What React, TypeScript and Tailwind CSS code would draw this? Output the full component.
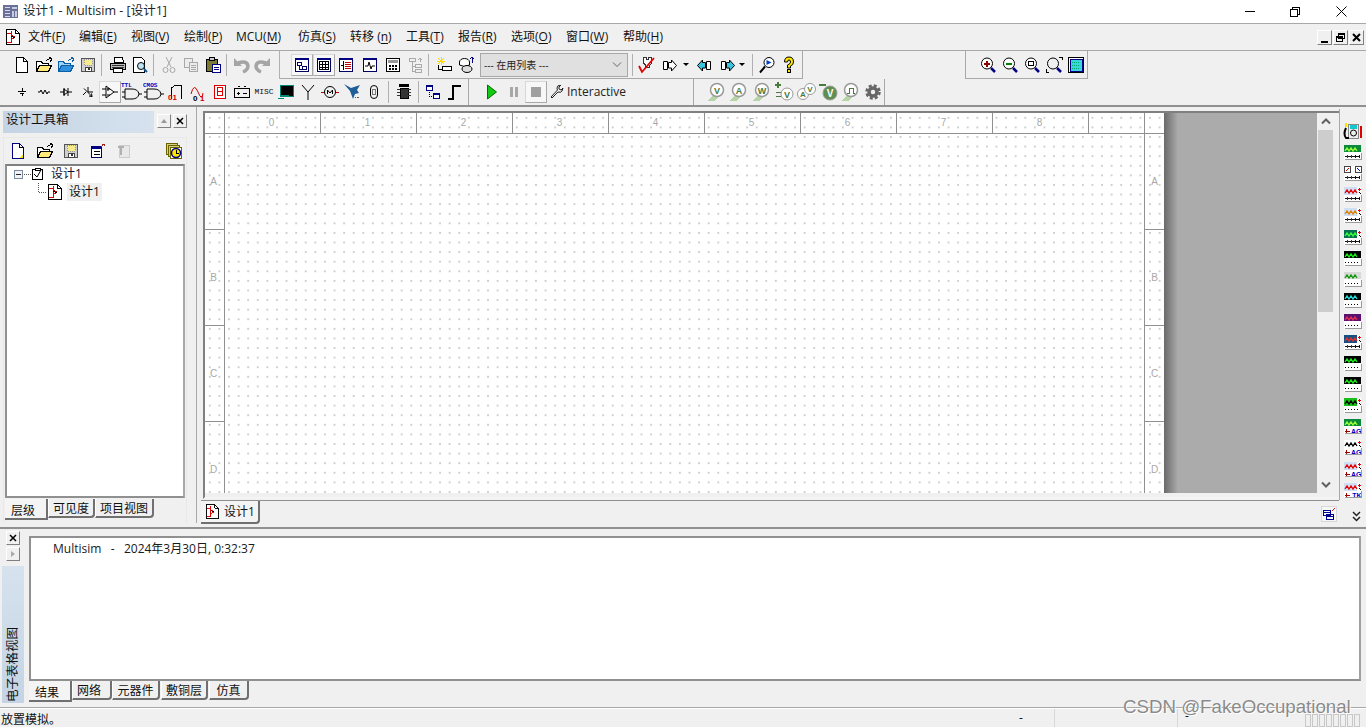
import React from "react";

type P = { children?: React.ReactNode; s?: number; w?: number; h?: number };
const Ic = ({ children, s = 18, w, h }: P) => (
  <svg width={w ?? s} height={h ?? s} viewBox={`0 0 ${w ?? s} ${h ?? s}`} fill="none" stroke="#000" strokeWidth="1" shapeRendering="crispEdges" className="shrink-0">
    {children}
  </svg>
);

const New = ({ y = false }: { y?: boolean }) => (
  <Ic><path d="M3.5 1.5h7l4 4v11h-11z" fill="#fff" stroke={y ? "#000080" : "#000"} />{y && <path d="M10 16l4-4v4z" fill="#ffe000" stroke="none" />}<path d="M10.5 1.5v4h4" /></Ic>
);
const Open = () => (
  <Ic><path d="M1.5 5.5h5l1 2h6v8h-12z" fill="#fff" /><path d="M1.5 15.5l3-6h12l-3 6z" fill="#ffe97a" /><path d="M11 5q2-3 5-2M14 1l3 2-2 3" stroke="#000" /></Ic>
);
const Open2 = () => (
  <Ic><path d="M1.5 5.5h5l1 2h6v8h-12z" fill="#9fd0f5" stroke="#0b5fa8" /><path d="M1.5 15.5l3-6h12l-3 6z" fill="#2f8fdc" stroke="#0b5fa8" /><path d="M11 5q2-3 5-2M14 1l3 2-2 3" stroke="#0b5fa8" /></Ic>
);
const Save = () => (
  <Ic><path d="M2.5 2.5h13v13h-13z" fill="#cfcfcf" stroke="#555" /><path d="M5 3h8v6H5z" fill="#f7ec8a" stroke="#999" strokeDasharray="1 1" /><path d="M6 11h6v4H6z" fill="#fff" stroke="#444" /><path d="M9 12h2v2H9z" fill="#333" stroke="none" /></Ic>
);
const Printer = () => (
  <Ic><path d="M5.5 1.5h8l1 5h-9z" fill="#fff" /><path d="M1.5 7.5h15v6h-15z" fill="#bbb" /><path d="M4.5 12.5h9v4h-9z" fill="#fff" /><path d="M3 9h12M3 11h12" stroke="#333" /></Ic>
);
const Preview = () => (
  <Ic><path d="M2.5 1.5h8l3 3v12h-11z" fill="#fff" /><circle cx="10" cy="10" r="3.5" fill="#bfe5f5" stroke="#000" shapeRendering="auto" /><path d="M13 13l3 3" stroke="#0a5a9a" strokeWidth="2" shapeRendering="auto" /></Ic>
);
const Cut = () => (
  <Ic><g stroke="#a8a8a8" shapeRendering="auto"><path d="M6 1l5 10M12 1L7 11" /><circle cx="5.5" cy="14" r="2.5" /><circle cx="12.5" cy="14" r="2.5" /></g></Ic>
);
const Copy = () => (
  <Ic><g stroke="#a8a8a8" fill="#ececec"><path d="M2.5 2.5h8v9h-8z" /><path d="M7.5 6.5h8v9h-8z" /><path d="M9 9h5M9 11h5M9 13h5" /></g></Ic>
);
const Paste = () => (
  <Ic><path d="M2.5 3.5h11v12h-11z" fill="#7b7a33" /><path d="M5.5 1.5h5v3h-5z" fill="#ccc" /><path d="M8.5 8.5h8v8h-8z" fill="#fff" stroke="#000080" /><path d="M10 11h5M10 13h5" stroke="#000080" /></Ic>
);
const Undo = ({ flip = false }: { flip?: boolean }) => (
  <Ic><g transform={flip ? "translate(18 0) scale(-1 1)" : undefined} shapeRendering="auto"><path d="M2 2v8h8z" fill="#a5a5a5" stroke="none" /><path d="M6 7q9-3 10 3 0 4-5 6" stroke="#a5a5a5" strokeWidth="3.5" /></g></Ic>
);
const Win = ({ k }: { k: number }) => (
  <Ic s={18}>
    <path d="M2.5 2.5h13v13h-13z" fill="#fff" stroke="#000060" strokeWidth="1" />
    <path d="M2 2h14v2H2z" fill="#000080" stroke="none" />
    {k === 0 && <path d="M4.5 6.5h4v3h-4zM9.5 10.5h4v3h-4zM6 10v3h3" stroke="#000060" />}
    {k === 1 && <path d="M4.5 5.5h9v8h-9zM4 8.5h10M4 11h10M7.5 5v9M10.5 5v9" stroke="#000" />}
    {k === 2 && <><path d="M6.500 5v9" stroke="#000" /><path d="M8 6h6M8 8h6M8 10h6M8 12h6" stroke="#c00000" /><path d="M3.500 9h3" stroke="#000" /></>}
    {k === 3 && <path d="M4 10h3l1-4 2 7 1-3h3" stroke="#000" shapeRendering="auto" />}
  </Ic>
);
const Calc = () => (
  <Ic><path d="M2.5 2.5h13v13h-13z" fill="#fff" /><path d="M4 4h10v3H4z" fill="#999" stroke="none" /><path d="M5 9h1v1H5zM8 9h1v1H8zM11 9h1v1h-1zM5 12h1v1H5zM8 12h1v1H8zM11 12h1v1h-1z" fill="#000" /></Ic>
);
const TreeG = () => (
  <Ic><g stroke="#aaa"><path d="M3.5 2.5h6v3h-6zM9.5 8.5h6v3h-6zM9.5 13.5h6v3h-6zM6 6v9h3M6 10h3" /><path d="M14 2v4M12 4l2-2 2 2" /></g></Ic>
);
const Star = () => (
  <Ic><path d="M6 1v8M2 5h8M3 2l6 6M9 2L3 8" stroke="#ffd800" /><path d="M7.5 10.5h9v4h-9z" fill="#fff" /><path d="M3 9v4h4" stroke="#000" /></Ic>
);
const Db = () => (
  <Ic>
    <g shapeRendering="auto"><ellipse cx="6.5" cy="6" rx="5" ry="3.5" fill="#fff" /><path d="M1.5 6v3q5 3 10 0V6" fill="#fff" /><ellipse cx="9" cy="13" rx="5" ry="3.5" fill="#ddd" /></g>
    <path d="M14 1v6M12 3l2-2 2 2" stroke="#000080" />
  </Ic>
);
const Check = () => (
  <Ic><path d="M5.5 1.5h3v2h2v-2h3v6l-2 2v2h-4V9l-2-2z" fill="#fff" stroke="#333" /><path d="M1 10l3 6L16 2" stroke="#e00000" strokeWidth="1.800" shapeRendering="auto" /></Ic>
);
const Xfer = ({ c = "#fff", flip }: { c?: string; flip?: boolean }) => (
  <Ic s={16}><g transform={flip ? "translate(16 0) scale(-1 1)" : undefined} shapeRendering="auto"><path d="M1.500 4.500h4v8h-4z" fill="#fff" stroke="#000" /><path d="M6.500 5.500h3V3l5 5.500-5 5.500v-3h-3z" fill={c} stroke="#000" /></g></Ic>
);
const Search = () => (
  <Ic><g shapeRendering="auto"><circle cx="11" cy="6.500" r="5" fill="#fff" /><path d="M8.500 4l5 2.500-5 2.500z" fill="#0040c0" stroke="none" /><path d="M7 10.500l-5 6" strokeWidth="2" /></g></Ic>
);
const Help = () => (
  <Ic><path d="M4.500 6q0-5 4.500-5t4.500 5q0 3-3 4v2h-3V9q3-1 3-3 0-2-1.500-2T7.500 6z" fill="#ffe800" stroke="#000" shapeRendering="auto" /><path d="M7.500 13.500h3v3h-3z" fill="#ffe800" /></Ic>
);
const Zoom = ({ k }: { k: number }) => (
  <Ic><g shapeRendering="auto"><circle cx="8" cy="7.500" r="5.500" fill={k === 3 ? "none" : "#fff"} /><path d="M12 12l4 4" stroke="#000080" strokeWidth="2.500" /></g>
    {k === 0 && <path d="M5 7h6v2H5zM7 5h2v6H7z" fill="#8b0000" stroke="none" />}
    {k === 1 && <path d="M5 7h6v2H5z" fill="#008000" stroke="none" />}
    {k === 2 && <path d="M5.500 5.500h5v4h-5z" />}
    {k === 3 && <path d="M1 13v3h3M14 1h3v3" />}
  </Ic>
);
const Fit = () => (
  <Ic><path d="M1.500 1.500h15v15h-15z" fill="#fff" /><path d="M3 3h12v12H3z" fill="#39d5dd" stroke="#000080" /><path d="M5 6h8M5 9h8M5 12h8" stroke="#0a6" strokeDasharray="1 1" /></Ic>
);

const Comp = ({ k }: { k: string }) => {
  const v: Record<string, React.ReactNode> = {
    src: <path d="M9 5v3M5 8h8M7 10h4M9 10v3" />,
    res: <path d="M3 9h2l1-2 2 4 2-4 2 4 1-2h2" shapeRendering="auto" />,
    dio: <path d="M3 9h4M11 9h4M11 5v8M7 6l4 3-4 3zM7 5v8" shapeRendering="auto" />,
    tra: <path d="M5 5.500l8 8M7 9l-3 3M9 4v5h5M13 13.500l-3-.5M13 13.500l-.5-3" shapeRendering="auto" />,
    ana: <path d="M1 6h4M1 12h4M13 9h4M5 3v12l8-6zM7 5v3M6 6h3M6 12h3" shapeRendering="auto" />,
  };
  return <Ic>{v[k]}</Ic>;
};
const Gate = ({ t, c }: { t: string; c: string }) => (
  <Ic s={22}><path d="M1 11h3M1 16h3M18 13h3M4 8h7q6 0 7 5-1 5-7 5H4z" shapeRendering="auto" /><text x="0" y="6" fontSize="6" fontWeight="700" fill={c} stroke="none" fontFamily="Liberation Mono">{t}</text></Ic>
);
const Seven = () => (
  <Ic><path d="M3.500 2.500h11v13h-11z" fill="#fff" stroke="#e00000" /><path d="M6.500 4.500h5v4h-5zM6.500 8.500h5v4h-5z" stroke="#e00000" /></Ic>
);
const Batt = () => (
  <Ic><path d="M1.500 5.500h15v9h-15zM5 3h2M11 3h2" /><path d="M4 10h3M5.500 8.500v3M10 10h4" /></Ic>
);
const Term = () => (
  <Ic><path d="M3.500 2.500h13v11h-13z" fill="#000" stroke="#087" /><path d="M1 15h6M4 12h8" stroke="#087" /></Ic>
);
const Ant = () => <Ic><path d="M9 9L3 2M9 9l6-7M9 9v8" shapeRendering="auto" /></Ic>;
const Motor = () => (
  <Ic><circle cx="9" cy="9" r="5.500" shapeRendering="auto" /><path d="M6.500 11V7l2.500 3 2.500-3v4" shapeRendering="auto" /><path d="M0 9h3M15 9h3" stroke="#c00000" /></Ic>
);
const Mech = () => (
  <Ic><path d="M1 1l7 4 9-3-3 5 2 3-4 1-2 5-3-8z" fill="#1f5d99" stroke="none" shapeRendering="auto" /><path d="M12 14h1M14 14h2" stroke="#555" /></Ic>
);
const Bulb = () => (
  <Ic><rect x="5.500" y="2.500" width="7" height="13" rx="3.500" shapeRendering="auto" /><path d="M7.500 6.500h3v5h-3z" stroke="#777" /></Ic>
);
const Mcu = () => (
  <Ic><path d="M5 5h8v10H5z" fill="#333" /><path d="M2 6h3M2 9h3M2 12h3M13 6h3M13 9h3M13 12h3" stroke="#333" /><path d="M4 1h10v3H4z" fill="#000" stroke="none" /></Ic>
);
const Hier = () => (
  <Ic><path d="M2.500 2.500h6v5h-6zM9.500 10.500h6v5h-6z" fill="#fff" stroke="#000080" /><path d="M3 3h5v1H3zM10 11h5v1h-5z" fill="#000080" stroke="none" /><path d="M5 9v4h3" strokeDasharray="1 1" stroke="#000" /></Ic>
);
const Bus = () => <Ic><path d="M2 16h5V3h8" stroke="#000" strokeWidth="2" /></Ic>;

const Meter = ({ l }: { l: string }) => {
  const c = l === "_n" ? <path d="M6 11h2V6h4v5h2" stroke="#4a7a3c" /> : <text x="10" y="11.500" fontSize="9" fontWeight="700" textAnchor="middle" fill="#4a7a3c" stroke="none" fontFamily="Liberation Sans">{l}</text>;
  return (
    <Ic s={20}>
      <path d="M1 19l5-6h7l-6 6z" fill="#b7d3a8" stroke="none" />
      <circle cx="10" cy="8" r="6.500" fill="#fff" stroke="#9a9a9a" strokeWidth="1.500" shapeRendering="auto" />
      {c}
    </Ic>
  );
};
const MeterP = () => (
  <Ic s={20}><path d="M1 3h6M4 0v6" stroke="#4a7a3c" strokeWidth="2" /><path d="M2 10h6M2 14h6" stroke="#4a7a3c" /><circle cx="13" cy="12" r="6" fill="#fff" stroke="#9a9a9a" shapeRendering="auto" /><text x="13" y="15.500" fontSize="9" fontWeight="700" textAnchor="middle" fill="#4a7a3c" stroke="none" fontFamily="Liberation Sans">V</text></Ic>
);
const MeterAV = () => (
  <Ic s={20}><circle cx="7" cy="12" r="5.500" fill="#fff" stroke="#9a9a9a" shapeRendering="auto" /><circle cx="14" cy="7" r="5.500" fill="#fff" stroke="#9a9a9a" shapeRendering="auto" /><text x="7" y="15" fontSize="8" fontWeight="700" textAnchor="middle" fill="#4a7a3c" stroke="none" fontFamily="Liberation Sans">A</text><text x="14" y="10" fontSize="8" fontWeight="700" textAnchor="middle" fill="#4a7a3c" stroke="none" fontFamily="Liberation Sans">V</text></Ic>
);
const MeterV = () => (
  <Ic s={20}><path d="M0 3h7" stroke="#4a7a3c" strokeWidth="2" /><circle cx="11" cy="11" r="7" fill="#5f8f50" stroke="#9a9a9a" shapeRendering="auto" /><text x="11" y="15" fontSize="10" fontWeight="700" textAnchor="middle" fill="#fff" stroke="none" fontFamily="Liberation Sans">V</text></Ic>
);
const Gear = () => (
  <Ic s={20}><circle cx="10" cy="10" r="4" stroke="#666" strokeWidth="3.500" shapeRendering="auto" /><circle cx="10" cy="10" r="6.500" stroke="#666" strokeWidth="2.500" strokeDasharray="3 2.100" shapeRendering="auto" /></Ic>
);

const Inst = ({ scr, tr, foot, big, two }: { scr: string; tr: string; foot: string; big?: boolean; two?: boolean }) => (
  <svg width="22" height="17" viewBox="0 0 22 17" fill="none" strokeWidth="1" shapeRendering="crispEdges" className="shrink-0">
    <path d="M2 1h17v15H2z" fill="#fff" />
    {two ? (
      <>
        <path d="M2.500 1.500h6v6h-6zM13.500 1.500h6v6h-6z" fill="#fff" stroke="#444" />
        <path d="M4 6l3-3" stroke="#d00000" /><path d="M15 3l3 3" stroke="#0000d0" />
      </>
    ) : (
      <>
        <path d={big ? "M2 1h17v7H2z" : "M2 1h13v8H2z"} fill={scr} />
        <path d="M3 7l2-3 2 3 2-3 2 3 2-3 2 3" stroke={tr} strokeWidth="1.300" shapeRendering="auto" />
        {big ? null : <path d="M16 3h3v1h-3zM17 2h1v3h-1z" fill="#e00000" />}
        {big ? null : <path d="M17 6h1v1h-1zM18 7h1v1h-1z" fill="#000" />}
      </>
    )}
    {foot === "AG" || foot === "TK" ? (
      <>
        <text x="19.500" y="15.500" textAnchor="end" fontSize="7" fontWeight="700" fill="#0000c8" fontFamily="Liberation Sans">{foot}</text>
        <path d="M3 13h5M4 11v4" stroke="#a00000" />
      </>
    ) : null}
    {foot === "dots" && <path d="M3 12.500h15" stroke="#000" strokeDasharray="1 2" />}
    {foot === "pins" && <><path d="M3 12.500h15" stroke="#111" /><path d="M5 11v3M9 11v3" stroke="#c00000" /><path d="M13 11v3M17 11v3" stroke="#0000a0" /></>}
    <path d="M2.500 15.500h17M19.500 9v7" stroke="#9a9a9a" />
  </svg>
);
const Multi = () => (
  <svg width="22" height="20" viewBox="0 0 22 20" fill="none" shapeRendering="crispEdges" className="shrink-0">
    <path d="M4 1v4" stroke="#ffe000" strokeWidth="2" /><path d="M19 4v12" stroke="#e00000" strokeWidth="2" />
    <path d="M6.500 2.500h10v14h-10z" fill="#eee" stroke="#888" /><path d="M8 3h7v4H8z" fill="#13c8cf" />
    <circle cx="11.500" cy="11" r="3" stroke="#000" shapeRendering="auto" />
    <path d="M4 6q-3 6 0 10h3" stroke="#000" strokeWidth="2" shapeRendering="auto" />
  </svg>
);

const B = ({ children, w = "w-[22px]", on }: { children?: React.ReactNode; w?: string; on?: boolean }) => (
  <div className={`${w} h-[22px] flex items-center justify-center shrink-0 ${on ? "border border-[#d8d8d8] border-b-[#a8a8a8] border-r-[#a8a8a8] bg-[#f7f7f7]" : ""}`}>{children}</div>
);

const Mn = ({ t, k }: { t: string; k: string }) => (
  <span>{t}(<span className="underline underline-offset-2">{k}</span>)</span>
);

const menus: [string, string, string][] = [
  ["文件", "F", "w-[51px]"], ["编辑", "E", "w-[52px]"], ["视图", "V", "w-[53px]"], ["绘制", "P", "w-[52px]"],
  ["MCU", "M", "w-[62px]"], ["仿真", "S", "w-[52px]"], ["转移 ", "n", "w-[56px]"], ["工具", "T", "w-[52px]"],
  ["报告", "R", "w-[53px]"], ["选项", "O", "w-[55px]"], ["窗口", "W", "w-[57px]"], ["帮助", "H", "w-[60px]"],
];

const SchemIcon = ({ s = 18 }: { s?: number }) => (
  <svg width={s} height={s} viewBox="0 0 18 18" fill="none" stroke="#000" shapeRendering="crispEdges" className="shrink-0">
    <path d="M2.500 1.500h9l4 4v11h-13z" fill="#fff" />
    <path d="M11.500 1.500v4h4" />
    <path d="M3 5.500h4v9H3M7 3v12M7 7l4 2-4 3" stroke="#e00000" />
    <path d="M7 8l4 2" stroke="#000" />
  </svg>
);

const cols = ["0", "1", "2", "3", "4", "5", "6", "7", "8"];
const rows = ["A", "B", "C", "D"];
const instruments: React.ReactNode[] = [
  <Multi />,
  <Inst scr="#0a8a3a" tr="#9dff3a" foot="pins" big />,
  <Inst scr="#fff" tr="#e00000" foot="pins" two />,
  <Inst scr="#cfe0f5" tr="#e00000" foot="pins" />,
  <Inst scr="#cfe0f5" tr="#e08000" foot="pins" />,
  <Inst scr="#087050" tr="#3aff3a" foot="pins" />,
  <Inst scr="#000" tr="#19f019" foot="dots" big />,
  <Inst scr="#d8d8d8" tr="#0a9a0a" foot="dots" big />,
  <Inst scr="#000" tr="#27e0e0" foot="dots" big />,
  <Inst scr="#5a1070" tr="#e03050" foot="dots" big />,
  <Inst scr="#155080" tr="#e03030" foot="pins" />,
  <Inst scr="#000" tr="#19f019" foot="dots" big />,
  <Inst scr="#000" tr="#19f019" foot="dots" big />,
  <Inst scr="#19c019" tr="#000" foot="dots" />,
  <Inst scr="#0a8a3a" tr="#9dff3a" foot="AG" big />,
  <Inst scr="#fff" tr="#000" foot="AG" />,
  <Inst scr="#cfe0f5" tr="#e00000" foot="AG" />,
  <Inst scr="#cfe0f5" tr="#e00000" foot="TK" />,
];

const Tab = ({ t, w, on, c = "" }: { t: string; w: string; on?: boolean; c?: string }) => (
  <div className={`${w} ${c} flex items-center justify-center shrink-0 border-r-2 border-b-2 border-[#707070] ${on ? "h-[21px] bg-[#f4f4f4] pt-[5px] pr-[5px]" : "h-[19px] pt-[2px] border-l border-l-white rounded-br-sm"}`}>{t}</div>
);

const MiniBtn = ({ children }: { children: React.ReactNode }) => (
  <div className="w-[14px] h-[14px] flex items-center justify-center border border-white border-r-[#808080] border-b-[#808080] bg-[#f0f0f0] shrink-0">{children}</div>
);

export default function App() {
  return (
    <div className="relative w-[1366px] h-[727px] overflow-hidden bg-[#f0f0f0] text-[12px] leading-none text-black font-['Open_Sans','Noto_Sans_CJK_SC',sans-serif] flex flex-col">
      {/* title */}
      <div className="h-[23px] bg-white flex items-center shrink-0">
        <svg width="18" height="16" viewBox="0 0 18 16" className="ml-[2px] shrink-0" shapeRendering="crispEdges">
          <path d="M1 1h15v13H1z" fill="#6a7098" /><path d="M3 3h5v1H3zM3 6h5v1H3zM3 9h5v1H3zM3 12h5v1H3z" fill="#d8dce8" /><path d="M10 3h5v2h-5zM10 7h2v6h-2zM13 7h2v6h-2z" fill="#c8cce0" />
        </svg>
        <span className="ml-[3px] text-[12.5px] text-[#222]">设计1 - Multisim - [设计1]</span>
        <div className="ml-auto mr-[2px] flex items-center h-full">
          <div className="w-[45px] flex justify-center"><div className="w-[10px] h-px bg-black" /></div>
          <div className="w-[46px] flex justify-center">
            <svg width="10" height="10" viewBox="0 0 10 10" fill="none" stroke="#000" shapeRendering="crispEdges"><path d="M.5 2.500h7v7h-7zM2.500 2V.5h7v7H8" /></svg>
          </div>
          <div className="w-[46px] flex justify-center">
            <svg width="11" height="11" viewBox="0 0 11 11" fill="none" stroke="#000"><path d="M.5.5l10 10M10.500.5L.5 10.500" /></svg>
          </div>
        </div>
      </div>
      {/* menu */}
      <div className="h-[28px] border-t border-[#a8a8a8] border-b border-b-[#a8a8a8] flex items-center shrink-0 pl-[4px]">
        <SchemIcon s={18} />
        <div className="flex ml-[6px] text-[12px] text-[#111]">
          {menus.map(([t, k, w]) => (
            <div key={k} className={w}><Mn t={t} k={k} /></div>
          ))}
        </div>
        <div className="ml-auto mr-[2px] flex gap-px">
          {["_", "r", "x"].map((g) => (
            <div key={g} className="w-[15px] h-[15px] border border-white border-r-[#808080] border-b-[#808080] flex items-center justify-center">
              <svg width="11" height="11" viewBox="0 0 11 11" fill="none" stroke="#000" strokeWidth="1" shapeRendering="crispEdges">
                {g === "_" && <path d="M2 9h6v1.500H2z" fill="#000" />}
                {g === "r" && <path d="M3.500 1.500h6v5h-6zM1.500 4.500h6v5h-6zM3 2.500h6M1 5.500h6" />}
                {g === "x" && <path d="M2 2l7 7M9 2L2 9" strokeWidth="2" shapeRendering="auto" />}
              </svg>
            </div>
          ))}
        </div>
      </div>
      {/* toolbar 1 */}
      <div className="h-[28px] flex items-center shrink-0">
        <div className="h-full flex items-center pl-[11px] pr-[2px] w-[280px] border-r border-[#b0b0b0] shrink-0">
          <B><New /></B><B><Open /></B><B><Open2 /></B><B><Save /></B>
          <div className="w-px h-[22px] bg-[#b0b0b0] ml-[2px] mr-[5px]" />
          <B><Printer /></B><B><Preview /></B>
          <div className="w-px h-[22px] bg-[#b0b0b0] ml-[2px] mr-[4px]" />
          <B><Cut /></B><B><Copy /></B><B><Paste /></B>
          <div className="w-px h-[22px] bg-[#b0b0b0] ml-[2px] mr-[3px]" />
          <B><Undo /></B><B><Undo flip /></B>
        </div>
        <div className="h-full w-[523px] flex items-center pl-[11px] border-r border-b border-[#a8a8a8] shrink-0">
          <B on><Win k={0} /></B><B on><Win k={1} /></B><B><Win k={2} /></B><B w="w-[25px]"><Win k={3} /></B><B><Calc /></B><B><TreeG /></B>
          <div className="w-px h-[22px] bg-[#b0b0b0] ml-[2px] mr-[4px]" />
          <B><Star /></B><B w="w-[24px]"><Db /></B>
          <div className="w-[148px] h-[24px] ml-[1px] bg-[#e0e0e0] border border-[#a8a8a8] flex items-center pl-[3px] pr-[2px] text-[10px] text-[#222] shrink-0">
            <span>--- 在用列表 ---</span>
            <svg className="ml-auto mr-[2px]" width="12" height="8" viewBox="0 0 12 8" fill="none" stroke="#666"><path d="M2 1.500l4 4 4-4" /></svg>
          </div>
          <div className="w-px h-[22px] bg-[#b0b0b0] ml-[4px] mr-[3px]" />
          <B><Check /></B>
          <B w="w-[24px]"><Xfer /></B>
          <div className="w-[8px] flex justify-center"><div className="border-x-[3px] border-x-transparent border-t-[3px] border-t-black" /></div>
          <B w="w-[28px]"><Xfer c="#39c5e0" flip /></B>
          <B w="w-[20px]"><Xfer c="#39c5e0" /></B>
          <div className="w-[8px] flex justify-center"><div className="border-x-[3px] border-x-transparent border-t-[3px] border-t-black" /></div>
          <div className="w-px h-[22px] bg-[#b0b0b0] ml-[6px] mr-[3px]" />
          <B><Search /></B><B><Help /></B>
        </div>
        <div className="h-full ml-[162px] w-[123px] flex items-center pl-[11px] border-x border-b border-[#a8a8a8] shrink-0">
          <B><Zoom k={0} /></B><B><Zoom k={1} /></B><B><Zoom k={2} /></B><B><Zoom k={3} /></B><B><Fit /></B>
        </div>
      </div>
      {/* toolbar 2 */}
      <div className="h-[28px] flex items-center shrink-0 border-b-2 border-[#909090]">
        <div className="h-full w-[469px] flex items-center pl-[11px] border-r border-[#a8a8a8] shrink-0">
          <B><Comp k="src" /></B><B><Comp k="res" /></B><B><Comp k="dio" /></B><B><Comp k="tra" /></B><B on><Comp k="ana" /></B>
          <B><Gate t="TTL" c="#0000c0" /></B><B><Gate t="CMOS" c="#0000c0" /></B>
          <B><Ic><path d="M4.500 16V5l4-3h6v14" /><text x="1" y="17" fontSize="8" fontWeight="700" fill="#d00000" stroke="none" fontFamily="Liberation Sans">01</text></Ic></B>
          <B><Ic><path d="M2 11q3-12 7-2t5 1" stroke="#d00000" shapeRendering="auto" /><text x="4" y="18" fontSize="8" fontWeight="700" fill="#000" stroke="none" fontFamily="Liberation Sans">0</text><text x="11" y="18" fontSize="8" fontWeight="700" fill="#d00000" stroke="none" fontFamily="Liberation Sans">1</text></Ic></B>
          <B><Seven /></B><B><Batt /></B>
          <B><span className="text-[8px] font-['Liberation_Mono',monospace] text-[#111]">MISC</span></B>
          <B><Term /></B><B><Ant /></B><B><Motor /></B><B><Mech /></B><B><Bulb /></B>
          <div className="w-px h-[22px] bg-[#b0b0b0] ml-[3px] mr-[4px]" />
          <B><Mcu /></B>
          <div className="w-px h-[22px] bg-[#b0b0b0] mx-[3px]" />
          <B><Hier /></B><B><Bus /></B>
        </div>
        <div className="h-full w-[225px] flex items-center pl-[12px] border-r border-[#a8a8a8] shrink-0">
          <B><svg width="12" height="16" viewBox="0 0 12 16"><path d="M1.500 1l9 7-9 7z" fill="#12c912" stroke="#0a6a0a" /></svg></B>
          <B><div className="flex gap-[2px]"><div className="w-[3px] h-[10px] bg-[#a8a8a8]" /><div className="w-[3px] h-[10px] bg-[#a8a8a8]" /></div></B>
          <B on><div className="w-[10px] h-[10px] bg-[#a0a0a0]" /></B>
          <svg width="14" height="14" viewBox="0 0 14 14" fill="none" stroke="#222" className="ml-[3px] shrink-0"><path d="M1 12l1 1 6-6q3 1 4-1l1-3-2 2-2-1 0-2 2-2q-4 0-4 3 0 1 .5 2z" /></svg>
          <span className="ml-[3px] text-[12px] text-[#222] font-['Open_Sans',sans-serif]">Interactive</span>
        </div>
        <div className="h-full w-[191px] flex items-center pl-[12px] border-r border-[#a8a8a8] shrink-0">
          <B><Meter l="V" /></B><B><Meter l="A" /></B><B w="w-[23px]"><Meter l="W" /></B><B w="w-[22px]"><MeterP /></B><B w="w-[22px]"><MeterAV /></B><B w="w-[23px]"><MeterV /></B><B><Meter l="_n" /></B><B><Gear /></B>
        </div>
      </div>
      {/* main */}
      <div className="h-[422px] flex shrink-0 border-b-2 border-[#909090]">
        {/* left panel */}
        <div className="w-[197px] border-r border-[#a8a8a8] h-[416px] pl-[3px] pt-[4px] shrink-0">
          <div className="flex items-center h-[22px]">
            <div className="w-[151px] h-[22px] bg-gradient-to-r from-[#c4d4e4] to-[#d6e2ee] flex items-center pl-[3px] pb-[4px] text-[12.5px] text-[#111]">设计工具箱</div>
            <div className="ml-[3px] mb-[3px]"><MiniBtn><div className="border-x-[3px] border-x-transparent border-b-[4px] border-b-[#999]" /></MiniBtn></div>
            <div className="ml-[2px] mb-[3px]"><MiniBtn><svg width="8" height="8" viewBox="0 0 8 8" stroke="#000" strokeWidth="1.500"><path d="M1 1l6 6M7 1L1 7" /></svg></MiniBtn></div>
          </div>
          <div className="w-[184px] h-[386px] mt-[4px] border border-[#e8e8e8] border-b-0 flex flex-col">
            <div className="h-[26px] flex items-center pl-[5px] shrink-0">
              <div className="flex items-center gap-[8.5px]">
                <New y /><Open /><Save />
                <Ic><path d="M2.500 4.500h10v11h-10z" fill="#fff" stroke="#000060" /><path d="M2 4h11v3H2z" fill="#000080" stroke="none" /><path d="M4.500 9.500h6M4.500 12.500h6" /><path d="M12 5l3-3M13 2h2v2" stroke="#a02020" /></Ic>
                <Ic><path d="M4.500 3.500h10v12h-10z" fill="#e8e8e8" stroke="#ccc" /><path d="M3 4h6v2H7v7H5V6H3z" fill="#b0b0b0" stroke="none" /></Ic>
              </div>
              <div className="ml-[32px]"><Ic><path d="M1.500 1.500h11v11h-11z" fill="#d8d080" stroke="#6a6400" /><path d="M3.500 3.500h11v11h-11z" fill="#d8d080" stroke="#6a6400" /><path d="M5.500 5.500h11v11h-11z" fill="#fff" stroke="#6a6400" /><circle cx="11" cy="11" r="4.500" fill="#ffe800" stroke="#000080" strokeWidth="1.500" shapeRendering="auto" /><path d="M11 8v3h3" stroke="#000" /></Ic></div>
            </div>
            <div className="w-[180px] h-[334px] ml-[1px] bg-white border-2 border-[#909090] border-r-[#a8a8a8] border-t-[#808080] text-[#111] shrink-0">
              <div className="flex items-center h-[16px] pl-[7px]">
                <svg width="17" height="9" viewBox="0 0 17 9" fill="none" shapeRendering="crispEdges" className="shrink-0"><path d="M.5.5h8v8h-8z" fill="#f2f2f2" stroke="#7a8aa0" /><path d="M2 4.500h5" stroke="#223" /><path d="M10 4.500h7" stroke="#555" strokeDasharray="1 1" /></svg>
                <Ic s={14}><path d="M1.500 2.500h10v10h-10z" fill="#fff" /><path d="M4 1h5v2H4z" fill="#fff" stroke="#000" /><path d="M3 7l3 3 4-7" shapeRendering="auto" /></Ic>
                <span className="ml-[6px] text-[12px] text-[#113]">设计1</span>
              </div>
              <div className="flex items-center h-[18px] pl-[24px] mt-[1px]">
                <svg width="18" height="18" viewBox="0 0 18 18" fill="none" stroke="#555" strokeDasharray="1 1" shapeRendering="crispEdges" className="shrink-0 -ml-[2px]"><path d="M9.500 0v9.500H18" /></svg>
                <div className="ml-[-1px]"><SchemIcon s={18} /></div>
                <span className="ml-[3px] h-[18px] px-[2px] flex items-center bg-[#f0f0f0] text-[12px]">设计1</span>
              </div>
            </div>
            <div className="flex pl-[1px] mt-[1px] text-[12px] text-[#111]">
              <Tab t="层级" w="w-[43px]" on /><Tab t="可见度" w="w-[47px]" /><Tab t="项目视图" w="w-[59px]" />
            </div>
          </div>
        </div>
        {/* workspace */}
        <div className="flex-1 min-w-0 flex flex-col">
          <div className="h-[393px] ml-[6px] flex border-t-[2px] border-t-transparent shrink-0">
            <div className="flex-1 min-w-0 border-2 border-[#808080] border-b-[#f4f4f4] border-r-0 flex h-[388px] mt-[2px] overflow-hidden">
              {/* sheet */}
              <div className="w-[959px] h-[380px] shrink-0 bg-white bg-[radial-gradient(circle,#8a8a8a_0.5px,transparent_0.8px)] bg-[size:9.6px_9.6px] flex flex-col text-[10px] text-[#a8a8a8] font-['Liberation_Sans',sans-serif] overflow-hidden">
                <div className="h-[21px] flex border-b border-[#909090] shrink-0">
                  <div className="w-[20px] border-r border-[#909090] shrink-0" />
                  {cols.map((c) => (
                    <div key={c} className="w-[96px] border-r border-[#909090] flex items-center justify-center pr-[2px] shrink-0">{c}</div>
                  ))}
                  <div className="w-[56px] border-r border-[#909090] shrink-0" />
                </div>
                <div className="flex flex-1 min-h-0 overflow-hidden">
                  <div className="w-[20px] border-r border-[#909090] shrink-0">
                    {rows.map((r) => <div key={r} className="h-[96px] w-full border-b border-[#909090] flex items-center justify-center pr-[2px]">{r}</div>)}
                  </div>
                  <div className="w-[920px] shrink-0" />
                  <div className="w-[20px] shrink-0 border-l border-[#909090] ml-[-1px]">
                    {rows.map((r) => <div key={r} className="h-[96px] w-full border-b border-[#909090] flex items-center justify-center">{r}</div>)}
                  </div>
                </div>
              </div>
              {/* grey */}
              <div className="flex-1 h-[380px] bg-[#ababab] bg-[linear-gradient(90deg,#6a6a6a_0,#ababab_14px)]" />
              {/* scrollbar */}
              <div className="w-[17px] h-[380px] bg-[#f0f0f0] flex flex-col items-center shrink-0">
                <div className="h-[17px] w-full flex items-center justify-center">
                  <svg width="10" height="7" viewBox="0 0 10 7" fill="none" stroke="#606060" strokeWidth="2"><path d="M1 5.500l4-4 4 4" /></svg>
                </div>
                <div className="h-[182px] w-[15px] bg-[#cdcdcd] shrink-0" />
                <div className="mt-auto h-[17px] w-full flex items-center justify-center">
                  <svg width="10" height="7" viewBox="0 0 10 7" fill="none" stroke="#606060" strokeWidth="2"><path d="M1 1.500l4 4 4-4" /></svg>
                </div>
              </div>
              <div className="w-[5px] h-[380px] shrink-0" />
            </div>
            {/* instruments */}
            <div className="w-[27px] h-[391px] border-l border-[#a8a8a8] flex flex-col items-center pt-[12px] shrink-0">
              {instruments.map((x, i) => <div key={i} className="h-[21.1px] flex items-center justify-center shrink-0">{x}</div>)}
            </div>
          </div>
          <div className="flex-1 flex items-start">
            <div className="flex-1 min-w-0 h-full flex items-start ml-[4px] border-t border-[#909090]">
              <div className="w-[59px] h-[23px] border-r-2 border-b-2 border-[#707070] rounded-br-sm bg-[#f4f4f4] flex items-center pl-[3px] gap-[3px] text-[12px] text-[#111] shrink-0">
                <SchemIcon s={17} /><span>设计1</span>
              </div>
              <div className="ml-auto mr-[2px] mt-[5px] w-[16px] h-[16px] flex items-center justify-center bg-[#f6f6f6] border border-[#d8d8d8]">
                <svg width="14" height="14" viewBox="0 0 14 14" fill="none" stroke="#000090" shapeRendering="crispEdges"><path d="M1.500 3.500h7v5h-7zM4.500 7.500h7v5h-7zM1 5h8M4 9h8" /><path d="M10 4l3-3" stroke="#c02020" /></svg>
              </div>
            </div>
            <div className="w-[27px] h-full flex justify-end pr-[5px] pt-[11px] shrink-0">
              <svg width="9" height="11" viewBox="0 0 9 11" fill="none" stroke="#222" strokeWidth="1.500"><path d="M1 1l3.500 3.500L8 1M1 6l3.500 3.500L8 6" /></svg>
            </div>
          </div>
        </div>
      </div>
      {/* bottom panel */}
      <div className="h-[179px] flex shrink-0 border-b border-[#a8a8a8]">
        <div className="w-[29px] shrink-0 flex flex-col pl-[2px]">
          <div className="ml-[4px] mt-[2px]"><MiniBtn><svg width="8" height="8" viewBox="0 0 8 8" stroke="#000" strokeWidth="1.500"><path d="M1 1l6 6M7 1L1 7" /></svg></MiniBtn></div>
          <div className="ml-[4px] mt-[2px]"><MiniBtn><div className="border-y-[3px] border-y-transparent border-l-[4px] border-l-[#aaa]" /></MiniBtn></div>
          <div className="mt-[5px] w-[22px] h-[137px] bg-gradient-to-b from-[#d6e2ee] to-[#c4d4e4] flex items-end justify-center pb-[1px]">
            <span className="[writing-mode:vertical-rl] [text-orientation:sideways] rotate-180 text-[12.5px] leading-[14px] text-[#111] whitespace-nowrap">电子表格视图</span>
          </div>
        </div>
        <div className="flex-1 min-w-0 flex flex-col pt-[7px] pr-[5px]">
          <div className="h-[145px] bg-white border-2 border-[#909090] border-r-[#a0a0a0] pl-[22px] pt-[5px] text-[12px] text-[#1a1a1a] shrink-0 whitespace-pre">Multisim   -   2024年3月30日, 0:32:37</div>
          <div className="flex text-[12px] text-[#111]">
            <Tab t="结果" w="w-[43px]" on /><Tab t="网络" w="w-[40px]" c="pr-[5px]" /><Tab t="元器件" w="w-[48px]" /><div className="w-[1px]" /><Tab t="敷铜层" w="w-[47px]" /><div className="w-[1px]" /><Tab t="仿真" w="w-[40px]" />
          </div>
        </div>
      </div>
      {/* status */}
      <div className="flex-1 flex items-center border-t border-white text-[12px] text-[#111] min-h-0">
        <span className="pl-[1px] pt-[3px]">放置模拟。</span>
        <div className="ml-auto h-full flex items-center">
          <div className="w-[130px] h-full flex items-center pl-[94px] border-r border-[#d8d8d8]">-</div>
          <div className="w-[123px] h-full border-r border-[#d8d8d8]" />
          <div className="w-[188px] h-full flex items-end pl-[7px]">
            <span className="pb-[5px]">-</span>
            <div className="ml-auto mr-[6px] flex gap-px">
              {[0, 1, 2, 3, 4, 5, 6, 7].map((i) => <div key={i} className="w-[6px] h-[13px] border border-[#c8c8c8]" />)}
            </div>
          </div>
        </div>
      </div>
      {/* watermark */}
      <div className="absolute left-[1123px] top-[697px] text-[18.7px] leading-[20px] whitespace-nowrap text-[#8a8a8a] font-['Liberation_Sans',sans-serif] [text-shadow:0_0_1px_#fff,1px_1px_0_#fff]">CSDN @FakeOccupational</div>
    </div>
  );
}
